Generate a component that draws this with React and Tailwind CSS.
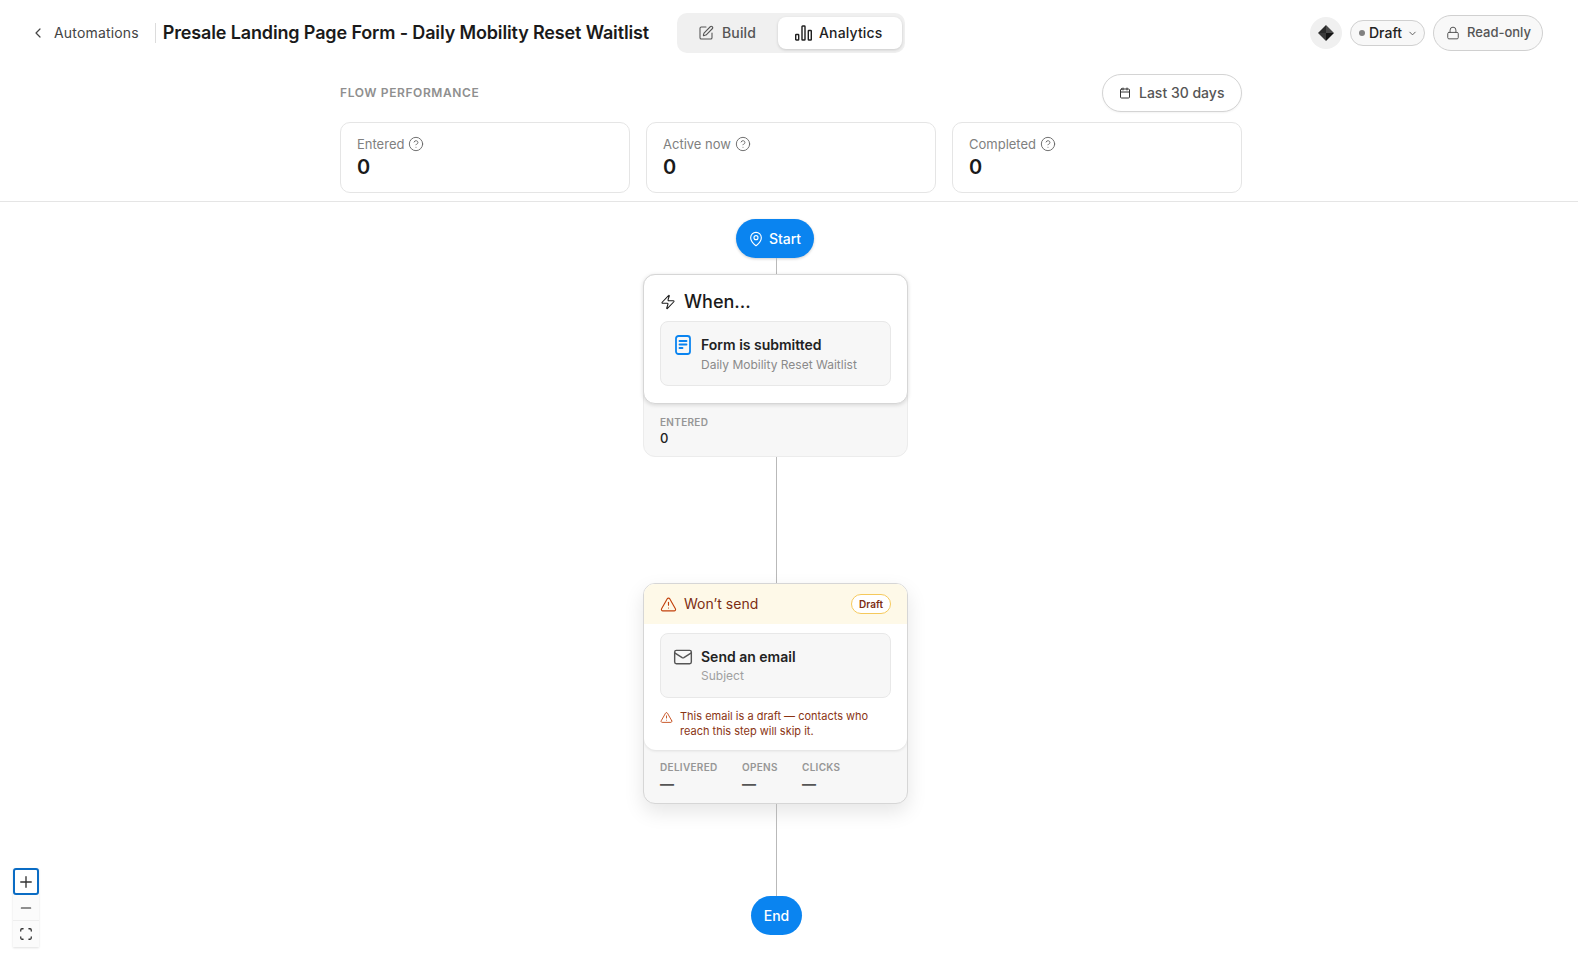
import React from 'react'
import { ChevronLeft, ChevronDown, SquarePen, Lock, CircleHelp, Calendar, MapPin, Zap, TriangleAlert, Mail, Plus, Minus, Scan } from 'lucide-react'

const stats = ['Entered', 'Active now', 'Completed']

function BarsIcon () {
  return (
    <svg width="17" height="18" viewBox="0 0 17 18" fill="none" stroke="#1f1f1f" strokeWidth="1.4">
      <rect x="0.7" y="10.5" width="3" height="5.5" rx="0.6" />
      <rect x="7" y="2" width="3" height="14" rx="0.6" />
      <rect x="13.3" y="6.5" width="3" height="9.5" rx="0.6" />
    </svg>
  )
}

function Logo () {
  return (
    <svg width="16" height="16" viewBox="0 0 16 16">
      <path d="M8 0 L8 8 L0 8 Z" fill="#2a2a2a" />
      <path d="M8 0 L16 8 L8 8 Z" fill="#4a4a4a" />
      <path d="M0 8 L8 8 L8 16 Z" fill="#3a3a3a" />
      <path d="M8 8 L16 8 L8 16 Z" fill="#141414" />
    </svg>
  )
}

function FormIcon () {
  return (
    <svg width="16" height="20" viewBox="0 0 16 20" fill="none" stroke="#0a84f0" strokeWidth="1.8" strokeLinecap="round">
      <rect x="1" y="1" width="14" height="18" rx="2.5" />
      <path d="M4.5 6h7M4.5 9.5h7M4.5 13h3" />
    </svg>
  )
}

function Connector ({ height }) {
  return <div className="w-px ml-px bg-[#b9b9b9] shrink-0" style={{ height }}></div>
}

function Metric ({ label, value, className }) {
  return (
    <div className={className}>
      <div className="text-[10px] leading-[12px] font-semibold tracking-[0.03em] text-[#969696] uppercase">{label}</div>
      {value === '—'
        ? <div className="text-sm leading-[18px] font-bold text-[#555] mt-[2px]">{value}</div>
        : <div className="text-[13px] leading-[18px] font-medium text-[#222] mt-px">{value}</div>}
    </div>
  )
}

export default function App () {
  return (
    <div className="relative h-[956px] overflow-hidden bg-white text-[#1a1a1a] font-['Inter',sans-serif]">
      <div className="flex items-center h-[66px] pl-[30px] pr-[35px]">
        <ChevronLeft size={16} strokeWidth={1.8} className="text-[#444]" />
        <span className="ml-2 text-sm tracking-[0.012em] text-[#444]">Automations</span>
        <div className="w-px h-5 bg-[#dcdcdc] ml-4"></div>
        <h1 className="ml-[7px] text-lg font-semibold tracking-[-0.008em] whitespace-nowrap">Presale Landing Page Form - Daily Mobility Reset Waitlist</h1>
        <div className="ml-[28px] flex items-center h-10 w-[228px] p-1 rounded-[10px] bg-[#f0f0f0]">
          <div className="flex items-center gap-2 shrink-0 w-[97px] h-8 pl-[17px] text-sm font-medium tracking-[0.01em] text-[#555]">
            <SquarePen size={16} strokeWidth={1.6} />
            Build
          </div>
          <div className="flex items-center gap-[7px] shrink-0 w-[124px] h-8 pl-[17px] rounded-lg bg-white shadow-[0_1px_3px_rgba(0,0,0,0.16)] text-sm font-medium tracking-[0.01em] text-[#1f1f1f]">
            <BarsIcon />
            Analytics
          </div>
        </div>
        <div className="ml-auto flex items-center justify-center w-8 h-8 rounded-full bg-[#f0f0f0]"><Logo /></div>
        <div className="ml-2 flex items-center h-[26px] w-[75px] pl-2 rounded-full border border-[#d0d0d0] bg-[#f8f8f8] text-sm font-medium text-[#222]">
          <span className="w-[6px] h-[6px] rounded-full bg-[#808080] mr-[4px]"></span>
          Draft
          <ChevronDown size={11} className="ml-[5px] text-[#555]" />
        </div>
        <div className="ml-2 flex items-center gap-[7px] h-9 w-[110px] pl-3 rounded-full border border-[#d0d0d0] bg-[#f8f8f8] text-[13px] font-medium text-[#555]">
          <Lock size={14} strokeWidth={1.7} />
          Read-only
        </div>
      </div>

      <div className="h-[136px] pt-2 border-b border-[#e5e5e5]">
        <div className="ml-[340px] w-[902px]">
          <div className="flex items-center justify-between h-[38px]">
            <span className="text-xs font-semibold tracking-[0.05em] text-[#8f8f8f] uppercase">Flow performance</span>
            <div className="flex items-center gap-2 h-[38px] w-[140px] pl-4 rounded-full border border-[#d4d4d4] bg-white shadow-[0_1px_2px_rgba(0,0,0,0.05)] text-sm font-medium text-[#555]">
              <Calendar size={12} strokeWidth={2} className="text-[#333]" />
              Last 30 days
            </div>
          </div>
          <div className="grid grid-cols-3 gap-4 mt-[10px]">
            {stats.map(function (s, index) {
              return (
                <div key={index} className="h-[71px] rounded-[10px] border border-[#e5e5e5] bg-white pl-4 pt-[11px]">
                  <div className="flex items-center gap-1 text-[13px] leading-5 text-[#808080]">
                    {s}
                    <CircleHelp size={16} strokeWidth={1.4} className="text-[#666]" />
                  </div>
                  <div className="text-xl leading-[26px] font-semibold text-[#1a1a1a]">0</div>
                </div>
              )
            })}
          </div>
        </div>
      </div>

      <div className="ml-[643px] w-[265px] flex flex-col items-center pt-[17px]">
        <div className="flex items-center justify-center gap-[5px] w-[78px] h-[39px] mr-[2px] rounded-full bg-[#0a84f0] shadow-[0_1px_3px_rgba(0,0,0,0.2)] text-sm font-medium text-white">
          <MapPin size={16} strokeWidth={1.7} />
          Start
        </div>
        <Connector height={16} />

        <div className="w-full h-[183px] rounded-xl bg-[#f7f7f7] border border-[#ececec]">
          <div className="-m-px h-[130px] rounded-xl bg-white border border-[#d6d6d6] shadow-[0_1px_4px_rgba(0,0,0,0.14)] px-4 pt-[14px]">
            <div className="flex items-center gap-2 h-[26px] text-lg leading-[26px] font-medium">
              <Zap size={16} strokeWidth={1.6} />
              When...
            </div>
            <div className="flex mt-[6px] h-[65px] rounded-lg border border-[#e8e8e8] bg-[#f7f7f7] pl-[14px] pt-[13px]">
              <FormIcon />
              <div className="ml-[10px]">
                <div className="text-sm leading-[20px] font-semibold text-[#222]">Form is submitted</div>
                <div className="text-xs leading-[16px] mt-[2px] text-[#8a8a8a]">Daily Mobility Reset Waitlist</div>
              </div>
            </div>
          </div>
          <Metric label="Entered" value="0" className="pl-4 pt-[13px]" />
        </div>
        <Connector height={126} />

        <div className="w-full h-[221px] overflow-hidden rounded-xl bg-[#f7f7f7] border border-[#d6d6d6] shadow-[0_8px_20px_rgba(0,0,0,0.1)]">
          <div className="h-[166px] rounded-b-xl bg-white shadow-[0_1px_3px_rgba(0,0,0,0.1)]">
            <div className="flex items-center h-[40px] px-4 bg-[#fef9e8] text-[#7c2d12]">
              <TriangleAlert size={17} strokeWidth={1.6} className="text-[#c2410c]" />
              <span className="ml-[7px] text-sm">Won’t send</span>
              <span className="ml-auto flex items-center h-5 px-[7px] rounded-full border border-[#f5c95c] bg-white text-[10px] font-semibold text-[#7c2d12]">Draft</span>
            </div>
            <div className="mx-4 mt-[9px] h-[65px] flex rounded-lg border border-[#e8e8e8] bg-[#f7f7f7] pl-3 pt-[13px]">
              <Mail size={20} strokeWidth={1.7} className="text-[#555]" />
              <div className="ml-2">
                <div className="text-sm leading-[20px] font-semibold text-[#222]">Send an email</div>
                <div className="text-xs leading-[16px] mt-px text-[#a0a0a0]">Subject</div>
              </div>
            </div>
            <div className="flex mx-4 mt-[11px]">
              <TriangleAlert size={13} strokeWidth={1.6} className="text-[#c2410c] mt-[2px] shrink-0" />
              <p className="ml-[7px] text-[11px] leading-[15px] text-[#8a3413]">This email is a draft — contacts who reach this step will skip it.</p>
            </div>
          </div>
          <div className="flex pl-4 pt-[11px]">
            <Metric label="Delivered" value="—" className="w-[82px]" />
            <Metric label="Opens" value="—" className="w-[60px]" />
            <Metric label="Clicks" value="—" />
          </div>
        </div>
        <Connector height={92} />

        <div className="flex items-center justify-center w-[51px] h-[39px] ml-[2px] rounded-full bg-[#0a84f0] text-sm font-medium text-white">End</div>
      </div>

      <div className="absolute left-[13px] top-[868px] w-[26px] flex flex-col bg-[#fbfbfb] shadow-[0_1px_2px_rgba(0,0,0,0.12)]">
        <div className="flex items-center justify-center h-[27px] rounded-[3px] border-2 border-[#0a6cc4] bg-white"><Plus size={18} strokeWidth={1.8} className="text-[#333]" /></div>
        <div className="flex items-center justify-center h-[26px] border-b border-[#eeeeee]"><Minus size={16} strokeWidth={1.7} className="text-[#222]" /></div>
        <div className="flex items-center justify-center h-[26px]"><Scan size={14} strokeWidth={2.2} className="text-[#333]" /></div>
      </div>
    </div>
  )
}
